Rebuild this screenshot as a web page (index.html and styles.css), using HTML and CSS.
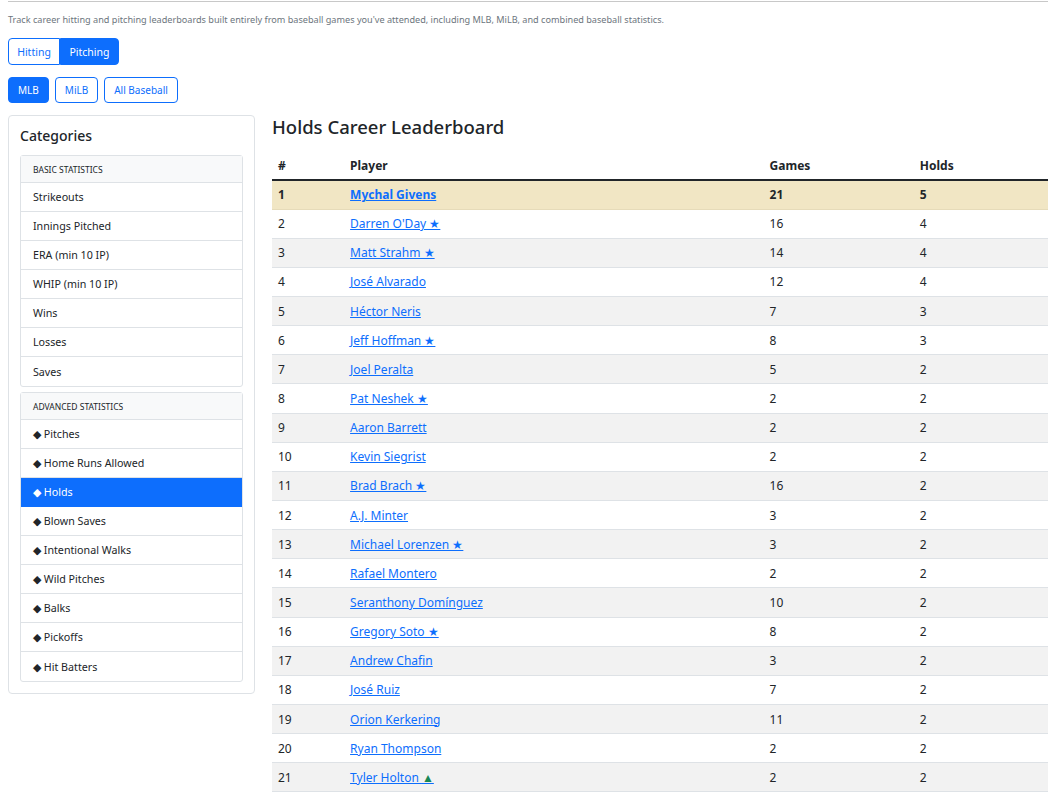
FILE: index.html
```html
<!DOCTYPE html>
<html lang="en">
<head>
<meta charset="utf-8">
<title>Holds Career Leaderboard</title>
<link rel="stylesheet" href="styles.css">
</head>
<body>
<div class="page">
  <p class="lead-text">Track career hitting and pitching leaderboards built entirely from baseball games you've attended, including MLB, MiLB, and combined baseball statistics.</p>
  <div class="btn-group">
    <a class="btn btn-outline grouped first">Hitting</a><a class="btn btn-primary grouped last">Pitching</a>
  </div>
  <div class="btn-row">
    <a class="btn btn-primary">MLB</a>
    <a class="btn btn-outline">MiLB</a>
    <a class="btn btn-outline">All Baseball</a>
  </div>
  <div class="layout">
    <aside class="card">
      <h5 class="card-title">Categories</h5>
      <ul class="list-group">
        <li class="lg-header">Basic Statistics</li>
        <li class="lg-item">Strikeouts</li>
        <li class="lg-item">Innings Pitched</li>
        <li class="lg-item">ERA (min 10 IP)</li>
        <li class="lg-item">WHIP (min 10 IP)</li>
        <li class="lg-item">Wins</li>
        <li class="lg-item">Losses</li>
        <li class="lg-item">Saves</li>
      </ul>
      <ul class="list-group adv">
        <li class="lg-header">Advanced Statistics</li>
        <li class="lg-item">◆ Pitches</li>
        <li class="lg-item">◆ Home Runs Allowed</li>
        <li class="lg-item active">◆ Holds</li>
        <li class="lg-item">◆ Blown Saves</li>
        <li class="lg-item">◆ Intentional Walks</li>
        <li class="lg-item">◆ Wild Pitches</li>
        <li class="lg-item">◆ Balks</li>
        <li class="lg-item">◆ Pickoffs</li>
        <li class="lg-item">◆ Hit Batters</li>
      </ul>
    </aside>
    <main class="main">
      <h4 class="title">Holds Career Leaderboard</h4>
      <table class="board">
        <colgroup><col class="c-rank"><col class="c-player"><col class="c-games"><col class="c-holds"></colgroup>
        <thead>
          <tr><th>#</th><th>Player</th><th>Games</th><th>Holds</th></tr>
        </thead>
        <tbody>
          <tr class="me"><td>1</td><td><a href="#">Mychal Givens</a></td><td>21</td><td>5</td></tr>
          <tr><td>2</td><td><a href="#">Darren O'Day ★</a></td><td>16</td><td>4</td></tr>
          <tr><td>3</td><td><a href="#">Matt Strahm ★</a></td><td>14</td><td>4</td></tr>
          <tr><td>4</td><td><a href="#">José Alvarado</a></td><td>12</td><td>4</td></tr>
          <tr><td>5</td><td><a href="#">Héctor Neris</a></td><td>7</td><td>3</td></tr>
          <tr><td>6</td><td><a href="#">Jeff Hoffman ★</a></td><td>8</td><td>3</td></tr>
          <tr><td>7</td><td><a href="#">Joel Peralta</a></td><td>5</td><td>2</td></tr>
          <tr><td>8</td><td><a href="#">Pat Neshek ★</a></td><td>2</td><td>2</td></tr>
          <tr><td>9</td><td><a href="#">Aaron Barrett</a></td><td>2</td><td>2</td></tr>
          <tr><td>10</td><td><a href="#">Kevin Siegrist</a></td><td>2</td><td>2</td></tr>
          <tr><td>11</td><td><a href="#">Brad Brach ★</a></td><td>16</td><td>2</td></tr>
          <tr><td>12</td><td><a href="#">A.J. Minter</a></td><td>3</td><td>2</td></tr>
          <tr><td>13</td><td><a href="#">Michael Lorenzen ★</a></td><td>3</td><td>2</td></tr>
          <tr><td>14</td><td><a href="#">Rafael Montero</a></td><td>2</td><td>2</td></tr>
          <tr><td>15</td><td><a href="#">Seranthony Domínguez</a></td><td>10</td><td>2</td></tr>
          <tr><td>16</td><td><a href="#">Gregory Soto ★</a></td><td>8</td><td>2</td></tr>
          <tr><td>17</td><td><a href="#">Andrew Chafin</a></td><td>3</td><td>2</td></tr>
          <tr><td>18</td><td><a href="#">José Ruiz</a></td><td>7</td><td>2</td></tr>
          <tr><td>19</td><td><a href="#">Orion Kerkering</a></td><td>11</td><td>2</td></tr>
          <tr><td>20</td><td><a href="#">Ryan Thompson</a></td><td>2</td><td>2</td></tr>
          <tr><td>21</td><td><a href="#">Tyler Holton <span class="tri">▲</span></a></td><td>2</td><td>2</td></tr>
        </tbody>
      </table>
    </main>
  </div>
</div>
</body>
</html>
```
FILE: styles.css
```css
* { box-sizing: border-box; }
html, body { margin: 0; padding: 0; }
body {
  font-family: "Noto Sans", "Open Sans", sans-serif;
  color: #212529;
  background: #fff;
  font-size: 11.5px;
}
.page {
  margin: 0 8px;
  border-top: 1px solid #c8c8c8;
  margin-top: 1px;
}
.lead-text {
  margin: 11px 0 0;
  font-size: 9.15px;
  line-height: 14px;
  color: #6c757d;
}
.btn-group { display: flex; margin-top: 11px; }
.btn {
  display: inline-flex;
  align-items: center;
  justify-content: center;
  height: 27px;
  padding: 0 8px;
  font-size: 10.5px;
  border: 1px solid #0d6efd;
  border-radius: 4px;
  text-decoration: none;
  cursor: pointer;
}
.btn-outline { background: #fff; color: #0d6efd; }
.btn-primary { background: #0d6efd; color: #fff; }
.grouped.first { border-top-right-radius: 0; border-bottom-right-radius: 0; width: 52px; }
.grouped.last { border-top-left-radius: 0; border-bottom-left-radius: 0; width: 59px; }
.btn-row { display: flex; gap: 6px; margin-top: 12px; }
.btn-row .btn { height: 26px; padding: 0 9px; font-size: 10px; }
.layout {
  display: grid;
  grid-template-columns: 247px 1fr;
  gap: 17px;
  margin-top: 12px;
}
.card {
  border: 1px solid #dee2e6;
  border-radius: 4px;
  padding: 10px 11px 11px;
  align-self: start;
}
.card-title {
  margin: 0 0 9px;
  font-size: 14px;
  font-weight: 500;
  line-height: 20px;
}
.list-group {
  list-style: none;
  margin: 0;
  padding: 0;
  border: 1px solid #dee2e6;
  border-radius: 3px;
}
.list-group.adv { margin-top: 5px; }
.lg-header {
  height: 27px;
  display: flex;
  align-items: center;
  padding: 0 12px;
  background: #f8f9fa;
  font-size: 8.5px;
  text-transform: uppercase;
  color: #212529;
  border-bottom: 1px solid #dee2e6;
}
.lg-item {
  height: 29px;
  display: flex;
  align-items: center;
  padding: 0 12px;
  font-size: 10.7px;
  border-bottom: 1px solid #dee2e6;
}
.lg-item:last-child { border-bottom: 0; }
.lg-item.active { background: #0d6efd; color: #fff; border-color: #0d6efd; }
.main { min-width: 0; }
.title {
  margin: 0;
  font-size: 18.5px;
  font-weight: 500;
  line-height: 24px;
}
.board {
  width: 100%;
  border-collapse: collapse;
  margin-top: 12px;
  font-size: 12px;
}
.c-rank { width: 72px; }
.c-player { width: 419px; }
.c-games { width: 150px; }
.c-holds { width: 134px; }
.board th {
  text-align: left;
  font-weight: 700;
  height: 29px;
  padding: 0 6px;
  border-bottom: 2px solid #212529;
}
.board td {
  height: 29.15px;
  padding: 0 6px;
  border-bottom: 1px solid #dee2e6;
}
.board tbody tr:nth-child(odd) td { background: #f2f2f2; }
.board tbody tr.me td { background: #f1e6c4; font-weight: 700; border-bottom-color: #e6dbb9; }
.board a { color: #0d6efd; text-decoration: underline; }
.tri { color: #198754; }
```
